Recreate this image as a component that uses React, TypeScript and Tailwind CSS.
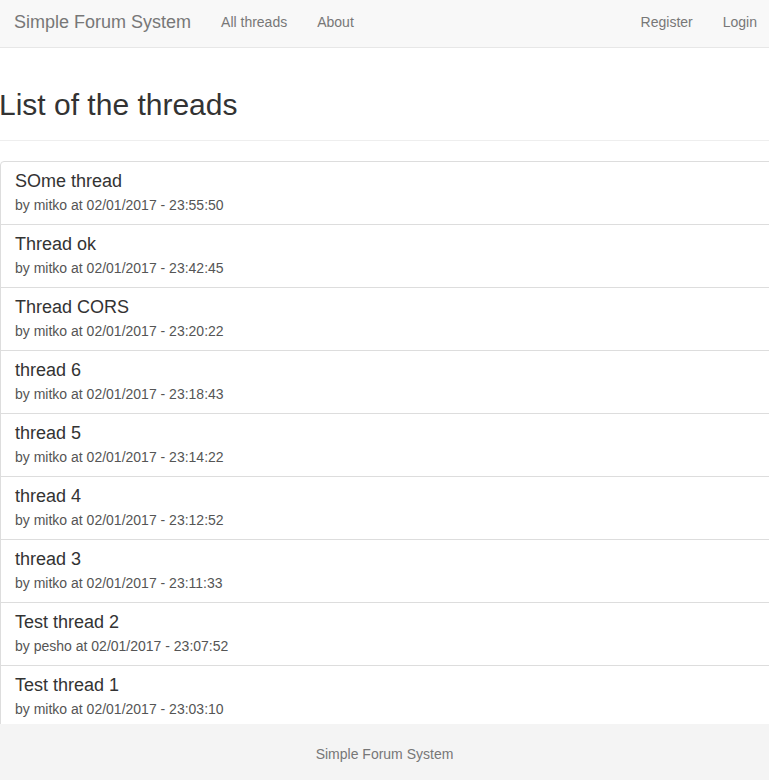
const threads = [
  { title: 'SOme thread', author: 'mitko', date: '02/01/2017 - 23:55:50' },
  { title: 'Thread ok', author: 'mitko', date: '02/01/2017 - 23:42:45' },
  { title: 'Thread CORS', author: 'mitko', date: '02/01/2017 - 23:20:22' },
  { title: 'thread 6', author: 'mitko', date: '02/01/2017 - 23:18:43' },
  { title: 'thread 5', author: 'mitko', date: '02/01/2017 - 23:14:22' },
  { title: 'thread 4', author: 'mitko', date: '02/01/2017 - 23:12:52' },
  { title: 'thread 3', author: 'mitko', date: '02/01/2017 - 23:11:33' },
  { title: 'Test thread 2', author: 'pesho', date: '02/01/2017 - 23:07:52' },
  { title: 'Test thread 1', author: 'mitko', date: '02/01/2017 - 23:03:10' },
];

export default function App() {
  return (
    <div className="min-h-[780px] bg-white text-[14px] text-[#333] overflow-x-hidden" style={{ fontFamily: '"Liberation Sans", Arial, sans-serif' }}>
      {/* Navbar */}
      <nav className="flex h-[48px] items-center border-b border-[#e7e7e7] bg-[#f8f8f8] pb-[4px] text-[#777]">
        <a className="pl-[14px] pr-[15px] text-[18px] leading-[20px]">Simple Forum System</a>
        <a className="px-[15px] leading-[20px]">All threads</a>
        <a className="px-[15px] leading-[20px]">About</a>
        <div className="ml-auto flex">
          <a className="px-[15px] leading-[20px]">Register</a>
          <a className="pl-[15px] pr-[12px] leading-[20px]">Login</a>
        </div>
      </nav>

      <main className="mr-[-15px]">
        <div className="mt-[40px] mb-[20px] border-b border-[#eee] pb-[9px]">
          <h2 className="mb-[10px] ml-[-1px] text-[30px] leading-[33px] font-normal">List of the threads</h2>
        </div>

        <div>
          {threads.map((t, i) => (
            <a
              key={i}
              className={
                'block border border-[#ddd] pl-[14px] pr-[15px] pt-[9px] pb-[10px] text-[#555] ' +
                (i === 0 ? 'rounded-tl-[4px] ' : '-mt-px ') +
                (i === threads.length - 1 ? 'rounded-bl-[4px]' : '')
              }
            >
              <h4 className="mb-[5px] text-[18px] leading-[20px] text-[#333] font-normal">{t.title}</h4>
              <p className="text-[14px] leading-[18px]">
                by {t.author} at {t.date}
              </p>
            </a>
          ))}
        </div>
      </main>

      {/* Footer */}
      <footer className="fixed bottom-0 left-0 right-0 flex h-[56px] items-center justify-center bg-[#f4f4f4] pt-[4px] text-[#777]">
        Simple Forum System
      </footer>
    </div>
  );
}
